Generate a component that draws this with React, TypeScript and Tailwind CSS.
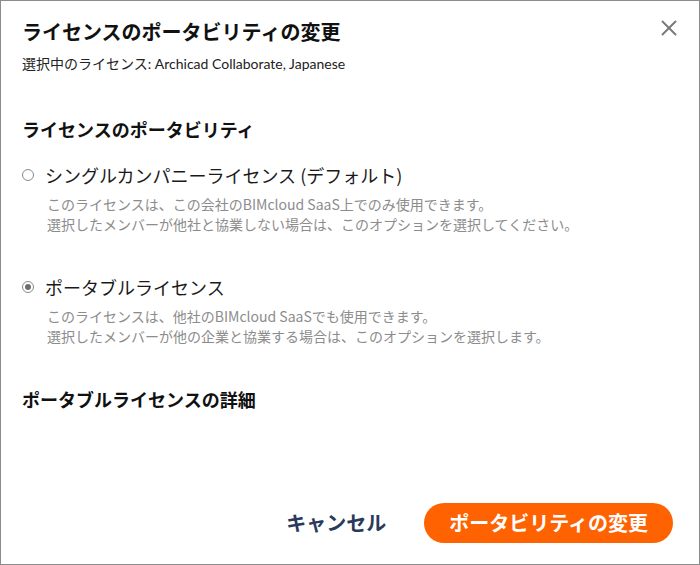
import { X } from "lucide-react";

const font = { fontFamily: '"Noto Sans CJK JP", "Noto Sans", sans-serif' };

function Radio({ checked, label, lines }: { checked?: boolean; label: string; lines: string[] }) {
  return (
    <div>
      <label className="flex items-center gap-[11px] text-[18px] leading-[26px] text-[#1a1a1a]">
        <span className="flex h-[12px] w-[12px] items-center justify-center rounded-full border border-[#8a8a8a] bg-white">
          {checked && <span className="h-[6px] w-[6px] rounded-full bg-[#6e6e6e]" />}
        </span>
        {label}
      </label>
      <div className="mt-[6px] pl-[25px] text-[14px] leading-[20px] text-[#8c8c8c]">
        {lines.map((l) => (
          <div key={l}>{l}</div>
        ))}
      </div>
    </div>
  );
}

export default function App() {
  return (
    <div style={font} className="relative flex h-[565px] w-[700px] flex-col border border-[#8c8c8c] bg-white">
      <button className="absolute right-[17px] top-[14px] text-[#7a7a7a]">
        <X size={26} strokeWidth={1.8} />
      </button>

      <div className="flex-1 pl-[21px] pr-6 pt-[17px]">
        <h1 className="text-[20px] font-bold leading-[28px] text-[#111]">ライセンスのポータビリティの変更</h1>
        <p className="mt-2 font-['Lato','Noto_Sans_CJK_JP',sans-serif] text-[14px] leading-[20px] text-[#222]">
          選択中のライセンス: Archicad Collaborate, Japanese
        </p>

        <h2 className="mt-[42px] text-[18px] font-bold leading-[26px] text-[#111]">ライセンスのポータビリティ</h2>

        <div className="mt-[20px]">
          <Radio
            label="シングルカンパニーライセンス (デフォルト)"
            lines={[
              "このライセンスは、この会社のBIMcloud SaaS上でのみ使用できます。",
              "選択したメンバーが他社と協業しない場合は、このオプションを選択してください。",
            ]}
          />
        </div>
        <div className="mt-[40px]">
          <Radio
            checked
            label="ポータブルライセンス"
            lines={[
              "このライセンスは、他社のBIMcloud SaaSでも使用できます。",
              "選択したメンバーが他の企業と協業する場合は、このオプションを選択します。",
            ]}
          />
        </div>

        <h2 className="mt-[40px] text-[18px] font-bold leading-[26px] text-[#111]">ポータブルライセンスの詳細</h2>
      </div>

      <div className="flex items-center justify-end gap-[38px] pb-[21px] pr-[26px]">
        <button className="text-[20px] font-bold text-[#2a3a5a]">キャンセル</button>
        <button className="h-[40px] rounded-full bg-[#ff6200] px-[25px] text-[20px] font-bold text-white">ポータビリティの変更</button>
      </div>
    </div>
  );
}
